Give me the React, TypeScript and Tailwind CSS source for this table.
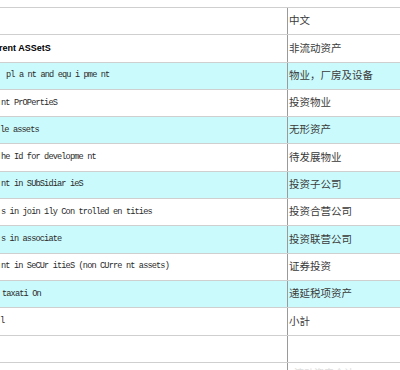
const rows = [
  { en: "", zh: "中文", cyan: false, bold: false, off: "ml-0" },
  { en: "rent ASSetS", zh: "非流动资产", cyan: false, bold: true, off: "-ml-[1px]" },
  { en: "pl a nt and equ i pme nt", zh: "物业，厂房及设备", cyan: true, bold: false, off: "ml-[6px]" },
  { en: "nt PrOPertieS", zh: "投资物业", cyan: false, bold: false, off: "ml-[1px]" },
  { en: "le assets", zh: "无形资产", cyan: true, bold: false, off: "ml-0" },
  { en: "he Id for developme nt", zh: "待发展物业", cyan: false, bold: false, off: "ml-[1px]" },
  { en: "nt in SUbSidiar ieS", zh: "投资子公司", cyan: true, bold: false, off: "ml-[1px]" },
  { en: "s in join 1ly Con trolled en tities", zh: "投资合营公司", cyan: false, bold: false, off: "ml-[1px]" },
  { en: "s in associate", zh: "投资联营公司", cyan: true, bold: false, off: "ml-[1px]" },
  { en: "nt in SeCUr itieS (non CUrre nt assets)", zh: "证券投资", cyan: false, bold: false, off: "ml-[1px]" },
  { en: "taxati On", zh: "递延税项资产", cyan: true, bold: false, off: "ml-[2px]" },
  { en: "l", zh: "小計", cyan: false, bold: false, off: "ml-0" },
  { en: "", zh: "", cyan: false, bold: false, off: "ml-0" },
];

export default function App() {
  return (
    <div className="w-[400px] h-[370px] overflow-hidden bg-white pt-[7px]">
      <div className="border-t border-[#cfcfcf]">
        {rows.map((r, i) => (
          <div
            key={i}
            className={`grid grid-cols-[288px_1fr] h-[27.3px] border-b border-[#cfcfcf] ${r.cyan ? "bg-[#cbfafc]" : "bg-white"}`}
          >
            <div className="flex items-center overflow-hidden border-r border-[#9a9a9a]">
              {r.bold ? (
                <span
                  className={`${r.off} whitespace-pre text-[9px] font-bold text-black`}
                  style={{ fontFamily: '"Liberation Sans", Arial, sans-serif' }}
                >
                  {r.en}
                </span>
              ) : (
                <span
                  className={`${r.off} whitespace-pre text-[8.6px] tracking-[-0.85px] text-[#2a2a2a]`}
                  style={{ fontFamily: '"Liberation Mono", monospace' }}
                >
                  {r.en}
                </span>
              )}
            </div>
            <div
              className="flex items-center pl-[1px] pb-[2px] text-[10.5px] text-[#3a3a3a]"
              style={{ fontFamily: '"Noto Sans CJK SC", sans-serif' }}
            >
              {r.zh}
            </div>
          </div>
        ))}
        <div className="grid grid-cols-[288px_1fr] h-[27px]">
          <div className="border-r border-[#9a9a9a] pt-[3px] pl-0">
            <span
              className="text-[8px] text-[#dddddd] whitespace-pre"
              style={{ fontFamily: '"Liberation Mono", monospace' }}
            >
              Current
            </span>
          </div>
          <div
            className="pt-[2px] pl-[6px] text-[10px] text-[#dddddd]"
            style={{ fontFamily: '"Noto Sans CJK SC", sans-serif' }}
          >
            流动资产合计
          </div>
        </div>
      </div>
    </div>
  );
}
